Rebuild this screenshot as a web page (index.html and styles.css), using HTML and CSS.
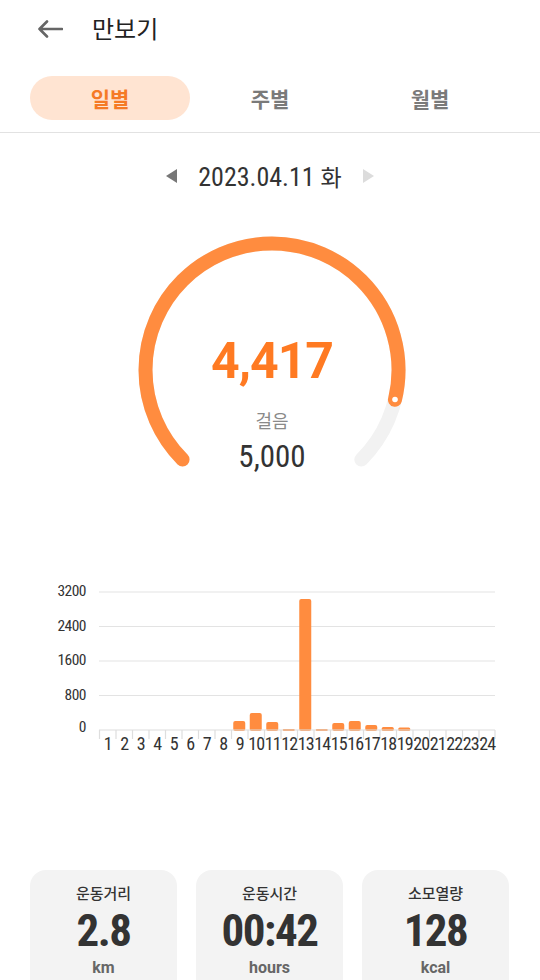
FILE: index.html
```html
<!DOCTYPE html>
<html lang="ko">
<head>
<meta charset="utf-8">
<title>만보기</title>
<link rel="stylesheet" href="styles.css">
</head>
<body>
<div class="app">
  <header class="topbar">
    <svg class="back" width="26" height="18" viewBox="0 0 26 18"><path d="M25 9H2.5M10 1.5L2.5 9L10 16.5" fill="none" stroke="#666" stroke-width="2.6" stroke-linecap="round" stroke-linejoin="round"/></svg>
    <h1 class="title">만보기</h1>
  </header>

  <nav class="tabs">
    <div class="tab active">일별</div>
    <div class="tab">주별</div>
    <div class="tab">월별</div>
  </nav>

  <div class="daterow">
    <svg class="tri" width="12" height="14" viewBox="0 0 12 14"><polygon points="11,0 11,14 0,7" fill="#777"/></svg>
    <span class="date">2023.04.11 <span class="dow">화</span></span>
    <svg class="tri" width="12" height="14" viewBox="0 0 12 14"><polygon points="1,0 1,14 12,7" fill="#dcdcdc"/></svg>
  </div>

  <section class="gauge">
    <svg class="ring" width="270" height="240" viewBox="0 0 270 240">
      <circle cx="135" cy="135" r="126.5" fill="none" stroke="#f2f2f2" stroke-width="14" stroke-linecap="round" stroke-dasharray="596.1 1000" transform="rotate(135 135 135)"/>
      <circle cx="135" cy="135" r="126.5" fill="none" stroke="#ff8c3f" stroke-width="14" stroke-linecap="round" stroke-dasharray="526.6 1000" transform="rotate(135 135 135)"/>
      <circle cx="258" cy="164.5" r="2.8" fill="#fff"/>
    </svg>
    <div class="gauge-text">
      <div class="steps">4,417</div>
      <div class="unit">걸음</div>
      <div class="goal">5,000</div>
    </div>
  </section>

  <section class="chart">
    <svg width="540" height="180" viewBox="0 580 540 180">
      <g stroke="#e3e3e3" stroke-width="1.2">
        <line x1="99" y1="593" x2="495" y2="593"/>
        <line x1="99" y1="627.5" x2="495" y2="627.5"/>
        <line x1="99" y1="662" x2="495" y2="662"/>
        <line x1="99" y1="696.5" x2="495" y2="696.5"/>
      </g>
      <g class="ylab" text-anchor="end">
        <text x="86" y="597">3200</text>
        <text x="86" y="631.5">2400</text>
        <text x="86" y="666">1600</text>
        <text x="86" y="700.5">800</text>
        <text x="86" y="733">0</text>
      </g>
      <g fill="#ff8c3f">
        <rect x="233.25" y="722" width="12" height="10" rx="2"/>
        <rect x="249.75" y="714" width="12" height="18" rx="2"/>
        <rect x="266.25" y="723" width="12" height="9" rx="2"/>
        <rect x="282.75" y="730" width="12" height="2" rx="1"/>
        <rect x="299.25" y="600" width="12" height="132" rx="2"/>
        <rect x="315.75" y="730" width="12" height="2" rx="1"/>
        <rect x="332.25" y="724" width="12" height="8" rx="2"/>
        <rect x="348.75" y="722" width="12" height="10" rx="2"/>
        <rect x="365.25" y="726" width="12" height="6" rx="2"/>
        <rect x="381.75" y="728" width="12" height="4" rx="1.5"/>
        <rect x="398.25" y="728.5" width="12" height="3.5" rx="1.5"/>
      </g>
      <g stroke="#dedede" stroke-width="1.2">
        <line x1="99" y1="731" x2="495" y2="731"/>
        <line x1="99.5" y1="731" x2="99.5" y2="740"/>
        <line x1="116" y1="731" x2="116" y2="740"/>
        <line x1="132.5" y1="731" x2="132.5" y2="740"/>
        <line x1="149" y1="731" x2="149" y2="740"/>
        <line x1="165.5" y1="731" x2="165.5" y2="740"/>
        <line x1="182" y1="731" x2="182" y2="740"/>
        <line x1="198.5" y1="731" x2="198.5" y2="740"/>
        <line x1="215" y1="731" x2="215" y2="740"/>
        <line x1="231.5" y1="731" x2="231.5" y2="740"/>
        <line x1="248" y1="731" x2="248" y2="740"/>
        <line x1="264.5" y1="731" x2="264.5" y2="740"/>
        <line x1="281" y1="731" x2="281" y2="740"/>
        <line x1="297.5" y1="731" x2="297.5" y2="740"/>
        <line x1="314" y1="731" x2="314" y2="740"/>
        <line x1="330.5" y1="731" x2="330.5" y2="740"/>
        <line x1="347" y1="731" x2="347" y2="740"/>
        <line x1="363.5" y1="731" x2="363.5" y2="740"/>
        <line x1="380" y1="731" x2="380" y2="740"/>
        <line x1="396.5" y1="731" x2="396.5" y2="740"/>
        <line x1="413" y1="731" x2="413" y2="740"/>
        <line x1="429.5" y1="731" x2="429.5" y2="740"/>
        <line x1="446" y1="731" x2="446" y2="740"/>
        <line x1="462.5" y1="731" x2="462.5" y2="740"/>
        <line x1="479" y1="731" x2="479" y2="740"/>
        <line x1="495" y1="731" x2="495" y2="740"/>
      </g>
      <g class="xlab" text-anchor="middle">
        <text x="107.75" y="751">1</text>
        <text x="124.25" y="751">2</text>
        <text x="140.75" y="751">3</text>
        <text x="157.25" y="751">4</text>
        <text x="173.75" y="751">5</text>
        <text x="190.25" y="751">6</text>
        <text x="206.75" y="751">7</text>
        <text x="223.25" y="751">8</text>
        <text x="239.75" y="751">9</text>
        <text x="256.25" y="751">10</text>
        <text x="272.75" y="751">11</text>
        <text x="289.25" y="751">12</text>
        <text x="305.75" y="751">13</text>
        <text x="322.25" y="751">14</text>
        <text x="338.75" y="751">15</text>
        <text x="355.25" y="751">16</text>
        <text x="371.75" y="751">17</text>
        <text x="388.25" y="751">18</text>
        <text x="404.75" y="751">19</text>
        <text x="421.25" y="751">20</text>
        <text x="437.75" y="751">21</text>
        <text x="454.25" y="751">22</text>
        <text x="470.75" y="751">23</text>
        <text x="487.25" y="751">24</text>
      </g>
    </svg>
  </section>

  <section class="cards">
    <div class="card">
      <div class="card-label">운동거리</div>
      <div class="card-value">2.8</div>
      <div class="card-unit">km</div>
    </div>
    <div class="card">
      <div class="card-label">운동시간</div>
      <div class="card-value">00:42</div>
      <div class="card-unit">hours</div>
    </div>
    <div class="card">
      <div class="card-label">소모열량</div>
      <div class="card-value">128</div>
      <div class="card-unit">kcal</div>
    </div>
  </section>
</div>
</body>
</html>
```
FILE: styles.css
```css
* { box-sizing: border-box; }
html, body { margin: 0; padding: 0; background: #fff; }
body {
  width: 540px;
  height: 980px;
  overflow: hidden;
  font-family: "Noto Sans CJK KR", Roboto, sans-serif;
  color: #222;
}

.topbar {
  height: 56px;
  display: flex;
  align-items: center;
  padding-left: 37px;
  gap: 29px;
}
.back { display: block; margin-top: 2px; }
.title {
  margin: 0;
  font-size: 24px;
  font-weight: 400;
  color: #222;
  line-height: 1;
}

.tabs {
  display: flex;
  padding: 20px 30px 12px;
  border-bottom: 1px solid #e2e2e2;
}
.tab {
  width: 160px;
  height: 44px;
  display: flex;
  align-items: center;
  justify-content: center;
  border-radius: 22px;
  font-size: 21px;
  font-weight: 700;
  color: #7a7a7a;
}
.tab.active {
  background: #ffe4d2;
  color: #f57a26;
}

.daterow {
  margin-top: 28px;
  height: 30px;
  display: flex;
  align-items: center;
  justify-content: center;
  gap: 20px;
}
.tri { display: block; }
.date {
  font-family: "Roboto Condensed", Roboto, "Noto Sans CJK KR", sans-serif;
  font-size: 26px;
  color: #333;
  line-height: 30px;
}
.dow { font-family: "Noto Sans CJK KR", sans-serif; font-size: 23px; }

.gauge {
  position: relative;
  width: 270px;
  height: 240px;
  margin: 44px auto 0;
  left: 2px;
}
.ring { display: block; }
.gauge-text {
  position: absolute;
  inset: 0;
  padding-top: 101px;
  display: flex;
  flex-direction: column;
  align-items: center;
}
.steps {
  font-family: Roboto, sans-serif;
  font-weight: 700;
  font-size: 50px;
  line-height: 50px;
  color: #ff7a22;
  letter-spacing: -1px;
}
.unit {
  margin-top: 22px;
  font-size: 18px;
  line-height: 24px;
  color: #8a8a8a;
}
.goal {
  margin-top: 8px;
  font-family: "Roboto Condensed", Roboto, sans-serif;
  font-size: 31px;
  line-height: 34px;
  color: #333;
}

.chart {
  margin-top: 104px;
  height: 180px;
}
.chart svg { display: block; }
.ylab text, .xlab text {
  font-family: "Roboto Condensed", Roboto, sans-serif;
  fill: #333;
}
.ylab text { font-size: 15.5px; letter-spacing: -0.5px; }
.xlab text { font-size: 18px; letter-spacing: -0.8px; }

.cards {
  margin-top: 111px;
  padding: 0 30px;
  display: grid;
  grid-template-columns: repeat(3, 147px);
  gap: 19px;
}
.card {
  height: 130px;
  background: #f3f3f3;
  border-radius: 16px;
  padding-top: 13px;
  display: flex;
  flex-direction: column;
  align-items: center;
}
.card-label {
  font-size: 15px;
  line-height: 20px;
  font-weight: 500;
  color: #333;
}
.card-value {
  margin-top: 1.5px;
  font-family: "Roboto Condensed", Roboto, sans-serif;
  font-weight: 700;
  font-size: 45px;
  line-height: 52px;
  letter-spacing: -1.5px;
  color: #333;
}
.card-unit {
  margin-top: 1px;
  font-family: Roboto, sans-serif;
  font-weight: 700;
  font-size: 16px;
  line-height: 20px;
  color: #666;
}
```
